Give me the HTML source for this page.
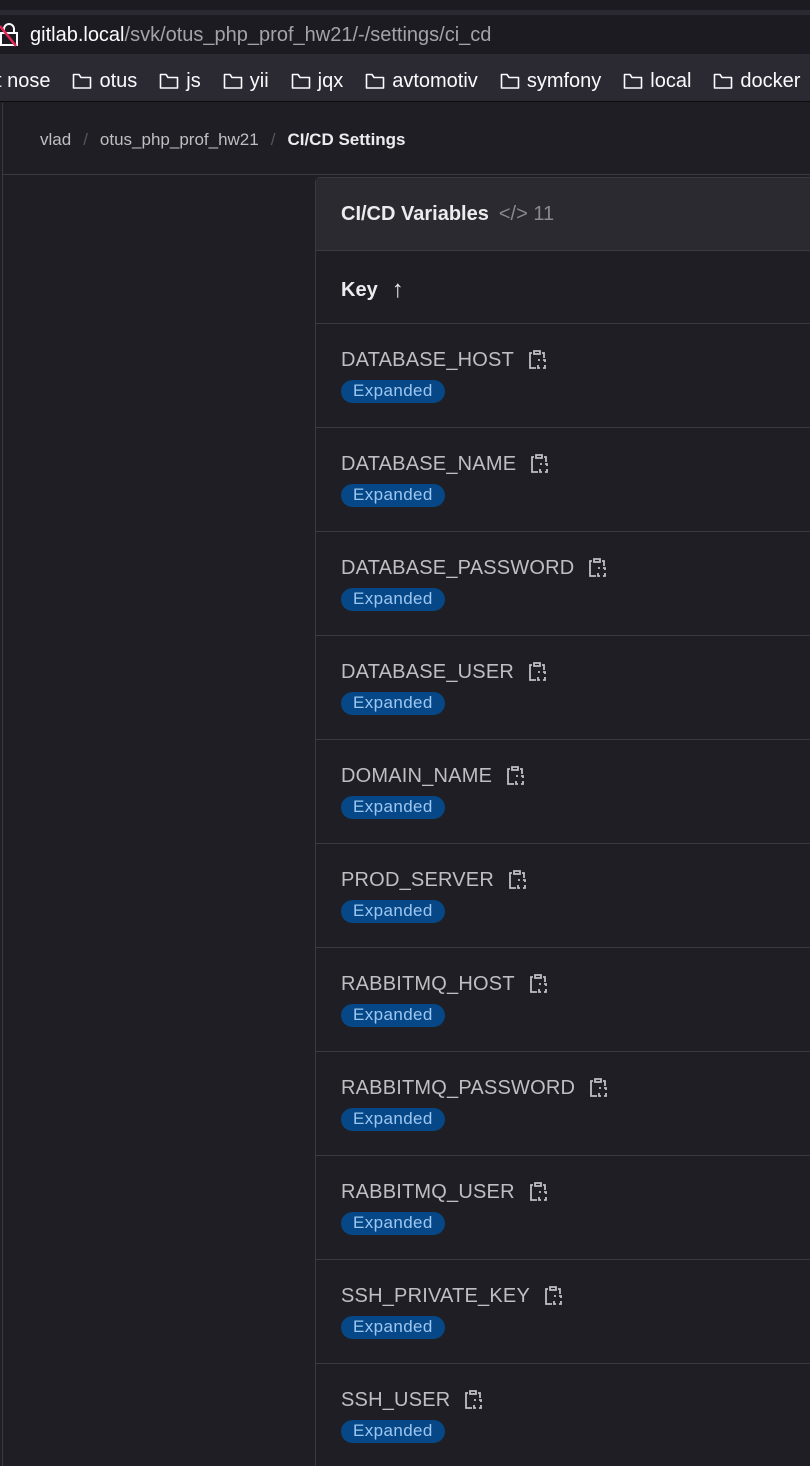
<!DOCTYPE html>
<html><head><style>
*{margin:0;padding:0;box-sizing:border-box}
html,body{width:810px;height:1466px;overflow:hidden}
body{background:#1f1e24;font-family:"Liberation Sans",sans-serif;position:relative;color:#ececef}
.top{position:absolute;left:0;top:0;width:810px;height:10px;background:#1c1b22}
.strip{position:absolute;left:0;top:10px;width:810px;height:5px;background:#2b2a33}
.url{position:absolute;left:0;top:15px;width:810px;height:39px;background:#1c1b22;font-size:20px;line-height:40px;padding-left:30px;color:#fbfbfe}
.url span{color:#a3a3a8}
.bm{position:absolute;left:0;top:54px;width:810px;height:48px;background:#2b2a33;border-bottom:1px solid #0c0c0d;font-size:20px;line-height:54px;color:#fbfbfe;white-space:nowrap}
.bm svg{margin:0 7px 0 22px;vertical-align:-3px}
.side{position:absolute;left:2px;top:103px;width:1px;height:1363px;background:#3a3a40}
.crumb{position:absolute;left:40px;top:130px;font-size:17px;color:#bfbfc3}
.crumb .s{color:#55555a;margin:0 12px}
.crumb b{color:#ececef}
.hline{position:absolute;left:3px;top:174px;width:807px;height:1px;background:#3a3a40}
.card{position:absolute;left:315px;top:177px;width:500px;height:1300px;border:1px solid #3a3a40;border-radius:5px 0 0 0}
.ch{height:73px;background:#2a2a30;border-bottom:1px solid #3a3a40;padding:25px 0 0 25px;font-size:20px;font-weight:bold}
.ch span{color:#89888d;font-weight:normal;margin-left:10px;font-size:20px}
.kh{height:73px;border-bottom:1px solid #3a3a40;padding:25px 0 0 25px;font-size:20px;font-weight:bold}
.kh span{font-weight:normal;font-size:24px;margin-left:14px;vertical-align:-1px}
.row{height:104px;border-bottom:1px solid #3a3a40;padding:24px 0 0 25px}
.k{font-size:20px;color:#bfbfc3;letter-spacing:.2px}
.k svg{vertical-align:-4px;margin-left:14px}
.b{display:inline-block;margin-top:8px;background:#064787;color:#9dc7f1;font-size:17px;padding:1px 12px 2px;border-radius:12px;letter-spacing:.4px}
</style></head><body>
<div class="top"></div><div class="strip"></div>
<div class="url">gitlab.local<span>/svk/otus_php_prof_hw21/-/settings/ci_cd</span></div>
<svg style="position:absolute;left:0;top:22px" width="20" height="26"><path d="M4 10V7a5 5 0 0 1 10 0v3M1 11h16v12H1z" fill="none" stroke="#fbfbfe" stroke-width="2"/><path d="M0 4L16 24" stroke="#e22850" stroke-width="2.5"/></svg>
<div class="bm"><span style="margin-left:-4px">t nose</span><svg width="20" height="18"><path d="M1.5 3v13h17V5.5H9L7 2.5H1.5z" fill="none" stroke="#fbfbfe" stroke-width="1.6" stroke-linejoin="round"/></svg>otus<svg width="20" height="18"><path d="M1.5 3v13h17V5.5H9L7 2.5H1.5z" fill="none" stroke="#fbfbfe" stroke-width="1.6" stroke-linejoin="round"/></svg>js<svg width="20" height="18"><path d="M1.5 3v13h17V5.5H9L7 2.5H1.5z" fill="none" stroke="#fbfbfe" stroke-width="1.6" stroke-linejoin="round"/></svg>yii<svg width="20" height="18"><path d="M1.5 3v13h17V5.5H9L7 2.5H1.5z" fill="none" stroke="#fbfbfe" stroke-width="1.6" stroke-linejoin="round"/></svg>jqx<svg width="20" height="18"><path d="M1.5 3v13h17V5.5H9L7 2.5H1.5z" fill="none" stroke="#fbfbfe" stroke-width="1.6" stroke-linejoin="round"/></svg>avtomotiv<svg width="20" height="18"><path d="M1.5 3v13h17V5.5H9L7 2.5H1.5z" fill="none" stroke="#fbfbfe" stroke-width="1.6" stroke-linejoin="round"/></svg>symfony<svg width="20" height="18"><path d="M1.5 3v13h17V5.5H9L7 2.5H1.5z" fill="none" stroke="#fbfbfe" stroke-width="1.6" stroke-linejoin="round"/></svg>local<svg width="20" height="18"><path d="M1.5 3v13h17V5.5H9L7 2.5H1.5z" fill="none" stroke="#fbfbfe" stroke-width="1.6" stroke-linejoin="round"/></svg>docker</div>
<div class="side"></div>
<div class="crumb">vlad<span class="s">/</span>otus_php_prof_hw21<span class="s">/</span><b>CI/CD Settings</b></div>
<div class="hline"></div>
<div class="card">
<div class="ch">CI/CD Variables<span>&lt;/&gt; 11</span></div>
<div class="kh">Key<span>↑</span></div>
<div class="row"><div class="k">DATABASE_HOST<svg width="18" height="22"><path d="M6 3h6v3H6zM4 5H2v15h6M14 5h2v5M10 12h2M15 12h2v2M10 17v3h2M17 17v3h-2" fill="none" stroke="#bfbfc3" stroke-width="1.8"/></svg></div><div class="b">Expanded</div></div>
<div class="row"><div class="k">DATABASE_NAME<svg width="18" height="22"><path d="M6 3h6v3H6zM4 5H2v15h6M14 5h2v5M10 12h2M15 12h2v2M10 17v3h2M17 17v3h-2" fill="none" stroke="#bfbfc3" stroke-width="1.8"/></svg></div><div class="b">Expanded</div></div>
<div class="row"><div class="k">DATABASE_PASSWORD<svg width="18" height="22"><path d="M6 3h6v3H6zM4 5H2v15h6M14 5h2v5M10 12h2M15 12h2v2M10 17v3h2M17 17v3h-2" fill="none" stroke="#bfbfc3" stroke-width="1.8"/></svg></div><div class="b">Expanded</div></div>
<div class="row"><div class="k">DATABASE_USER<svg width="18" height="22"><path d="M6 3h6v3H6zM4 5H2v15h6M14 5h2v5M10 12h2M15 12h2v2M10 17v3h2M17 17v3h-2" fill="none" stroke="#bfbfc3" stroke-width="1.8"/></svg></div><div class="b">Expanded</div></div>
<div class="row"><div class="k">DOMAIN_NAME<svg width="18" height="22"><path d="M6 3h6v3H6zM4 5H2v15h6M14 5h2v5M10 12h2M15 12h2v2M10 17v3h2M17 17v3h-2" fill="none" stroke="#bfbfc3" stroke-width="1.8"/></svg></div><div class="b">Expanded</div></div>
<div class="row"><div class="k">PROD_SERVER<svg width="18" height="22"><path d="M6 3h6v3H6zM4 5H2v15h6M14 5h2v5M10 12h2M15 12h2v2M10 17v3h2M17 17v3h-2" fill="none" stroke="#bfbfc3" stroke-width="1.8"/></svg></div><div class="b">Expanded</div></div>
<div class="row"><div class="k">RABBITMQ_HOST<svg width="18" height="22"><path d="M6 3h6v3H6zM4 5H2v15h6M14 5h2v5M10 12h2M15 12h2v2M10 17v3h2M17 17v3h-2" fill="none" stroke="#bfbfc3" stroke-width="1.8"/></svg></div><div class="b">Expanded</div></div>
<div class="row"><div class="k">RABBITMQ_PASSWORD<svg width="18" height="22"><path d="M6 3h6v3H6zM4 5H2v15h6M14 5h2v5M10 12h2M15 12h2v2M10 17v3h2M17 17v3h-2" fill="none" stroke="#bfbfc3" stroke-width="1.8"/></svg></div><div class="b">Expanded</div></div>
<div class="row"><div class="k">RABBITMQ_USER<svg width="18" height="22"><path d="M6 3h6v3H6zM4 5H2v15h6M14 5h2v5M10 12h2M15 12h2v2M10 17v3h2M17 17v3h-2" fill="none" stroke="#bfbfc3" stroke-width="1.8"/></svg></div><div class="b">Expanded</div></div>
<div class="row"><div class="k">SSH_PRIVATE_KEY<svg width="18" height="22"><path d="M6 3h6v3H6zM4 5H2v15h6M14 5h2v5M10 12h2M15 12h2v2M10 17v3h2M17 17v3h-2" fill="none" stroke="#bfbfc3" stroke-width="1.8"/></svg></div><div class="b">Expanded</div></div>
<div class="row"><div class="k">SSH_USER<svg width="18" height="22"><path d="M6 3h6v3H6zM4 5H2v15h6M14 5h2v5M10 12h2M15 12h2v2M10 17v3h2M17 17v3h-2" fill="none" stroke="#bfbfc3" stroke-width="1.8"/></svg></div><div class="b">Expanded</div></div>
</div>
</body></html>
